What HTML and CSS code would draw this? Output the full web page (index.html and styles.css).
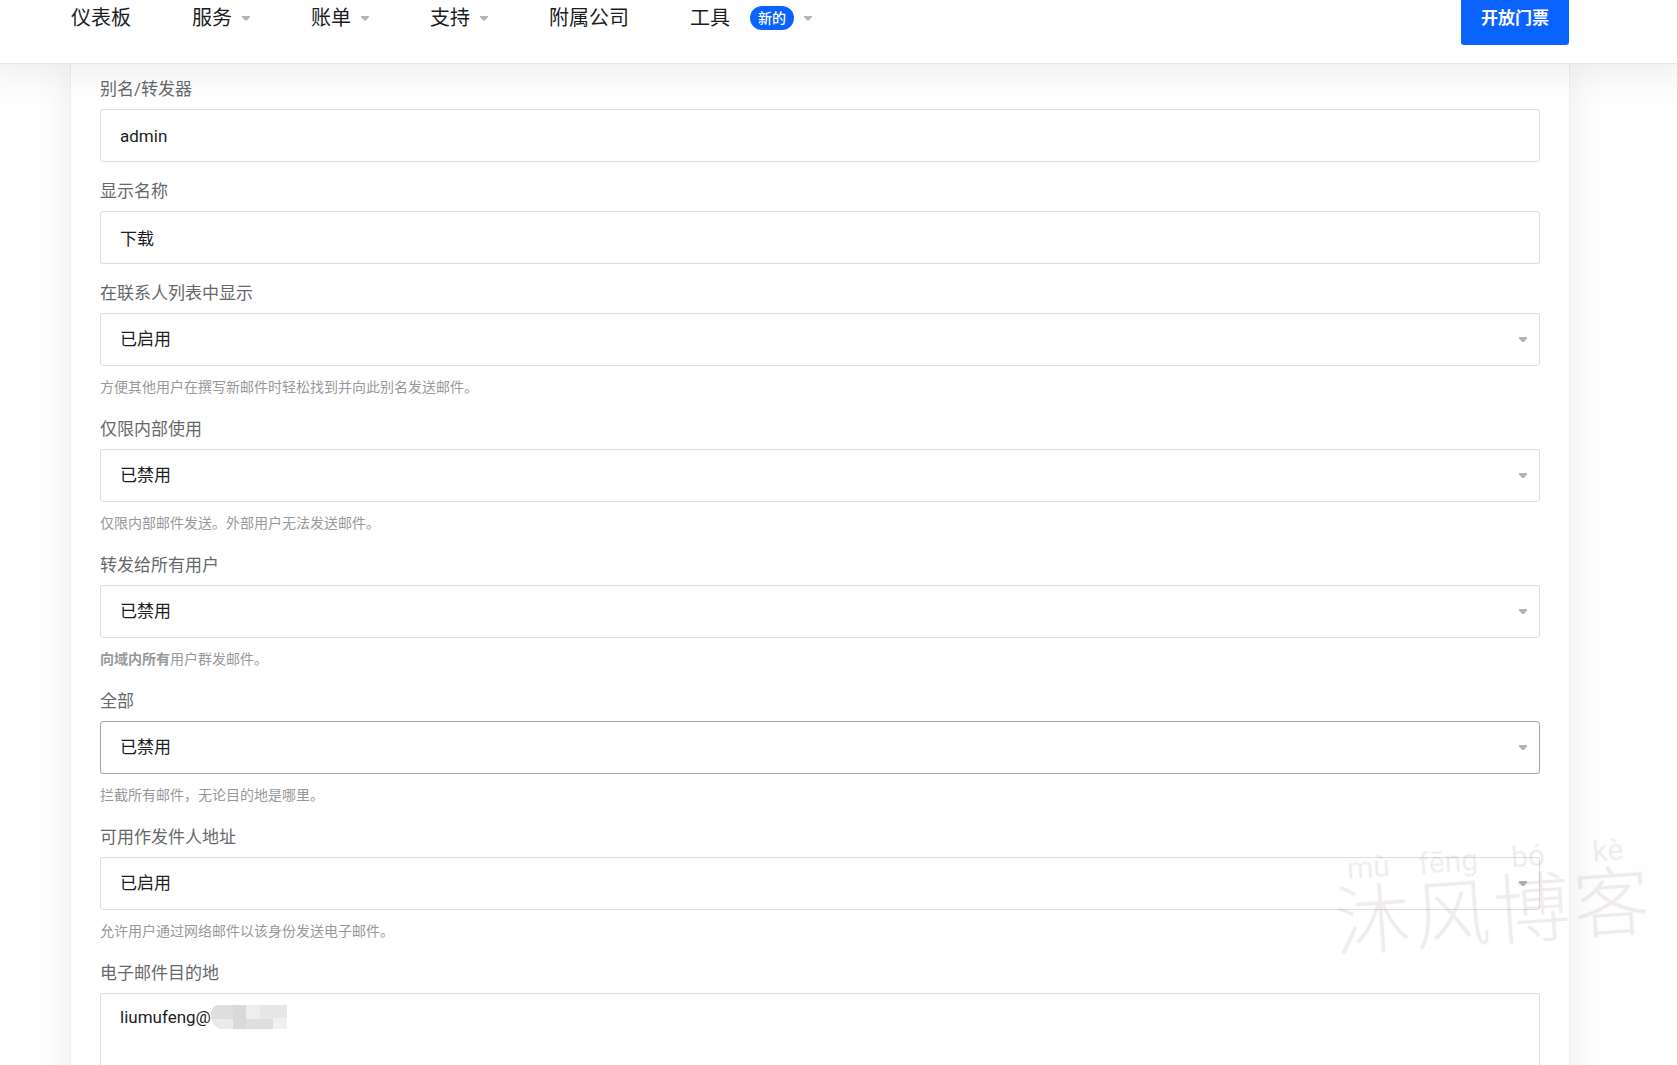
FILE: index.html
```html
<!DOCTYPE html>
<html lang="zh-CN">
<head>
    <meta charset="UTF-8">
    <meta name="viewport" content="width=device-width, initial-scale=1.0">
    <title>别名/转发器</title>
    <link rel="stylesheet" href="styles.css">
</head>
<body>
    <header class="header">
        <nav class="nav">
            <a href="#">仪表板</a>
            <a href="#" class="has-menu">服务</a>
            <a href="#" class="has-menu">账单</a>
            <a href="#" class="has-menu">支持</a>
            <a href="#">附属公司</a>
            <a href="#" class="has-menu">工具 <span class="badge">新的</span></a>
        </nav>
        <button type="button" class="ticket-button">开放门票</button>
    </header>

    <main class="container">
        <form class="card">
            <div class="field">
                <label for="alias">别名/转发器</label>
                <input type="text" id="alias" name="alias" value="admin">
            </div>

            <div class="field">
                <label for="displayName">显示名称</label>
                <input type="text" id="displayName" name="displayName" value="下载">
            </div>

            <div class="field">
                <label for="contacts">在联系人列表中显示</label>
                <div class="select">
                    <select id="contacts" name="contacts">
                        <option selected>已启用</option>
                        <option>已禁用</option>
                    </select>
                </div>
                <p class="help">方便其他用户在撰写新邮件时轻松找到并向此别名发送邮件。</p>
            </div>

            <div class="field">
                <label for="internal">仅限内部使用</label>
                <div class="select">
                    <select id="internal" name="internal">
                        <option>已启用</option>
                        <option selected>已禁用</option>
                    </select>
                </div>
                <p class="help">仅限内部邮件发送。外部用户无法发送邮件。</p>
            </div>

            <div class="field">
                <label for="forwardAll">转发给所有用户</label>
                <div class="select">
                    <select id="forwardAll" name="forwardAll">
                        <option>已启用</option>
                        <option selected>已禁用</option>
                    </select>
                </div>
                <p class="help"><strong>向域内所有</strong>用户群发邮件。</p>
            </div>

            <div class="field">
                <label for="catchAll">全部</label>
                <div class="select">
                    <select id="catchAll" name="catchAll" class="active">
                        <option>已启用</option>
                        <option selected>已禁用</option>
                    </select>
                </div>
                <p class="help">拦截所有邮件，无论目的地是哪里。</p>
            </div>

            <div class="field">
                <label for="sender">可用作发件人地址</label>
                <div class="select">
                    <select id="sender" name="sender">
                        <option selected>已启用</option>
                        <option>已禁用</option>
                    </select>
                </div>
                <p class="help">允许用户通过网络邮件以该身份发送电子邮件。</p>
            </div>

            <div class="field">
                <label for="destination">电子邮件目的地</label>
                <div class="destination">
                    <textarea id="destination" name="destination">liumufeng@</textarea>
                    <!-- hidden domain -->
                    <svg class="mosaic" width="76" height="24" viewBox="0 0 76 24" aria-hidden="true">
                        <path d="M6 0H76V24H10C3 22 0 16 0 10C0 5 2 2 6 0Z" fill="#e6e6e7"/>
                        <path d="M6 0H22V14H0V10C0 5 2 2 6 0Z" fill="#dfdddd"/>
                        <path d="M22 0H35V24H22Z" fill="#d9d9da"/>
                        <path d="M35 0H49V14H35Z" fill="#eeeeef"/>
                        <path d="M35 14H62V24H35Z" fill="#dedede"/>
                        <path d="M49 0H76V13H49Z" fill="#e6e6e7"/>
                        <path d="M62 13H76V24H62Z" fill="#f0f0f0"/>
                        <path d="M4 14H22V24H10Z" fill="#ebebeb"/>
                    </svg>
                </div>
            </div>
        </form>
    </main>

    <div class="watermark">
        <span>mù</span><span>fēng</span><span>bó</span><span>kè</span>
        <b>沐</b><b>风</b><b>博</b><b>客</b>
    </div>
</body>
</html>
```

FILE: styles.css
```css
* {
    box-sizing: border-box;
}
body {
    margin: 0;
    font-family: Roboto, "Noto Sans CJK SC", sans-serif;
    font-size: 17px;
    line-height: 24px;
    background-color: #fefefe;
    color: #1b1d1f;
    overflow: hidden;
    height: 100vh;
}
.header {
    position: relative;
    z-index: 10;
    display: flex;
    justify-content: space-between;
    align-items: flex-start;
    height: 64px;
    padding: 0 108px 0 71px;
    background-color: #fff;
    border-bottom: 1px solid #e6e6e6;
    box-shadow: 0 0 36px 10px rgba(0, 0, 0, 0.07);
}
.nav {
    display: flex;
    gap: 61px;
    padding-top: 6px;
}
.nav a {
    display: flex;
    align-items: center;
    font-size: 20px;
    color: #1b1d1f;
    text-decoration: none;
}
.has-menu::after,
.select::after {
    content: "";
    width: 8px;
    height: 5px;
    background-color: #b5b5b5;
    clip-path: polygon(0 0, 100% 0, 100% 30%, 62% 100%, 38% 100%, 0 30%);
}
.has-menu::after {
    margin-left: 10px;
}
.badge {
    margin-left: 20px;
    padding: 0 8px;
    border-radius: 12px;
    background-color: #0b63ff;
    color: #fff;
    font-size: 14px;
    font-weight: 500;
}
.ticket-button {
    height: 45px;
    padding: 0 20px 12px;
    border: none;
    border-radius: 0 0 3px 3px;
    background-color: #0b63ff;
    color: #fff;
    font-family: inherit;
    font-size: 17px;
    font-weight: bold;
    cursor: pointer;
}
.container {
    padding: 0 108px 0 71px;
}
.card {
    display: flex;
    flex-direction: column;
    gap: 17px;
    padding: 13px 29px 30px;
    background-color: #fff;
    box-shadow: 0 0 0 1px #efefef, 0 0 36px rgba(0, 0, 0, 0.08);
}
label {
    display: block;
    margin-bottom: 8px;
    color: #66696c;
}
input,
select,
textarea {
    display: block;
    width: 100%;
    height: 53px;
    padding: 0 19px;
    border: 1px solid #d9dddf;
    border-radius: 3px;
    background-color: #fff;
    color: #1b1d1f;
    font-family: inherit;
    font-size: 17px;
    line-height: 24px;
    outline: none;
}
select {
    appearance: none;
    padding-bottom: 2px;
}
.select,
.destination {
    position: relative;
}
.select::after {
    position: absolute;
    top: 24px;
    right: 13px;
}
select.active {
    border-color: #a3a6a8;
}
textarea {
    height: 160px;
    padding: 11px 19px;
    resize: none;
}
.mosaic {
    position: absolute;
    top: 12px;
    left: 111px;
}
.help {
    margin: 9px 0 0;
    padding-bottom: 1px;
    font-size: 14px;
    color: #97999b;
}
.watermark {
    position: fixed;
    right: 26px;
    bottom: 112px;
    z-index: 20;
    display: grid;
    grid-template-columns: repeat(4, 80px);
    justify-items: center;
    transform: rotate(-4deg);
    color: rgba(120, 70, 70, 0.1);
    pointer-events: none;
}
.watermark span {
    font-size: 30px;
    font-weight: 400;
    line-height: 28px;
}
.watermark b {
    font-size: 76px;
    font-weight: 300;
    line-height: 80px;
}
```
